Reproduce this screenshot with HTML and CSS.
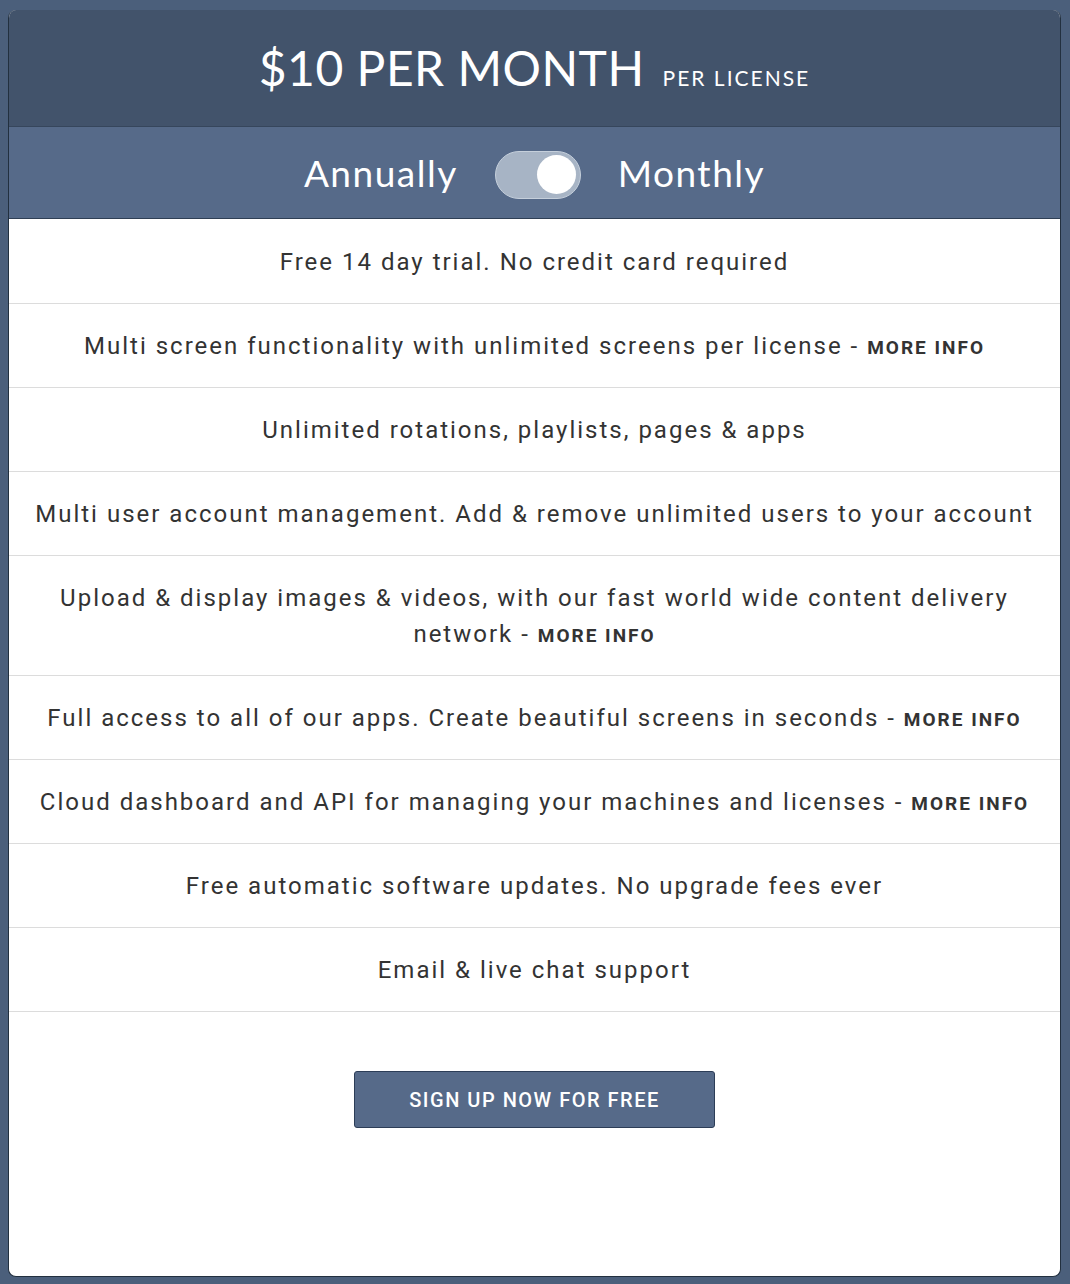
FILE: index.html
```html
<!DOCTYPE html>
<html lang="en">
<head>
  <meta charset="UTF-8">
  <meta name="viewport" content="width=device-width, initial-scale=1.0">
  <title>Pricing</title>
  <link rel="stylesheet" href="styles.css">
</head>
<body>
  <div class="pricing">
    <div class="price-head">
      <span class="price">$10 PER MONTH</span>
      <span class="per">PER LICENSE</span>
    </div>
    <div class="period">
      <span class="period-label">Annually</span>
      <span class="switch"><span class="knob"></span></span>
      <span class="period-label">Monthly</span>
    </div>
    <ul class="features">
      <li>Free 14 day trial. No credit card required</li>
      <li>Multi screen functionality with unlimited screens per license - <a href="#" class="more">More info</a></li>
      <li>Unlimited rotations, playlists, pages &amp; apps</li>
      <li>Multi user account management. Add &amp; remove unlimited users to your account</li>
      <li>Upload &amp; display images &amp; videos, with our fast world wide content delivery network - <a href="#" class="more">More info</a></li>
      <li>Full access to all of our apps. Create beautiful screens in seconds - <a href="#" class="more">More info</a></li>
      <li>Cloud dashboard and API for managing your machines and licenses - <a href="#" class="more">More info</a></li>
      <li>Free automatic software updates. No upgrade fees ever</li>
      <li>Email &amp; live chat support</li>
    </ul>
    <div class="signup">
      <button class="signup-btn">Sign up now for free</button>
    </div>
  </div>
</body>
</html>
```

FILE: styles.css
```css
html {
  background-color: #4b5f7b;
}

body {
  margin: 10px 9px 6px 8px;
  font-family: 'Roboto', sans-serif;
}

.pricing {
  background-color: #fff;
  border-radius: 8px;
  overflow: hidden;
  border: 1px solid #22303f;
  border-top: none;
  height: 1267px;
  box-sizing: border-box;
}

.price-head {
  background-color: #42536b;
  height: 116px;
  display: flex;
  justify-content: center;
  align-items: baseline;
  color: #fff;
  font-family: 'Lato', sans-serif;
  line-height: 116px;
  border-bottom: 1px solid #36465c;
}

.price {
  font-size: 48px;
  letter-spacing: 0.5px;
}

.per {
  font-size: 21px;
  letter-spacing: 2px;
  margin-left: 18px;
}

.period {
  background-color: #566a89;
  height: 91px;
  display: flex;
  justify-content: center;
  align-items: center;
  gap: 37px;
  border-bottom: 1px solid #2f3f55;
}

.period-label {
  color: #fff;
  font-family: 'Lato', sans-serif;
  font-size: 37px;
  letter-spacing: 1.5px;
}

.switch {
  width: 86px;
  height: 48px;
  border-radius: 24px;
  background-color: #a7b4c5;
  border: 1px solid #c5cfdb;
  display: flex;
  align-items: center;
  justify-content: flex-end;
  padding-right: 4px;
  box-sizing: border-box;
  margin-top: 4px;
}

.knob {
  width: 39px;
  height: 39px;
  border-radius: 50%;
  background-color: #fff;
}

.features {
  list-style: none;
  margin: 0;
  padding: 0;
}

.features li {
  padding: 24px 24px 23px;
  line-height: 36px;
  font-size: 24px;
  letter-spacing: 2px;
  color: #333;
  text-align: center;
  border-bottom: 1px solid #dcdcdc;
}

.features li:first-child {
  padding-top: 25px;
}

.more {
  color: #333;
  font-weight: bold;
  text-transform: uppercase;
  text-decoration: none;
  font-size: 19px;
  line-height: 20px;
  letter-spacing: 2px;
}

.signup {
  display: flex;
  justify-content: center;
  padding-top: 59px;
}

.signup-btn {
  width: 361px;
  height: 57px;
  background-color: #566a89;
  border: 1px solid #2c3d57;
  border-radius: 3px;
  color: #fff;
  font-family: 'Roboto', sans-serif;
  font-weight: 500;
  font-size: 20px;
  letter-spacing: 1.5px;
  text-transform: uppercase;
  cursor: pointer;
}
```
